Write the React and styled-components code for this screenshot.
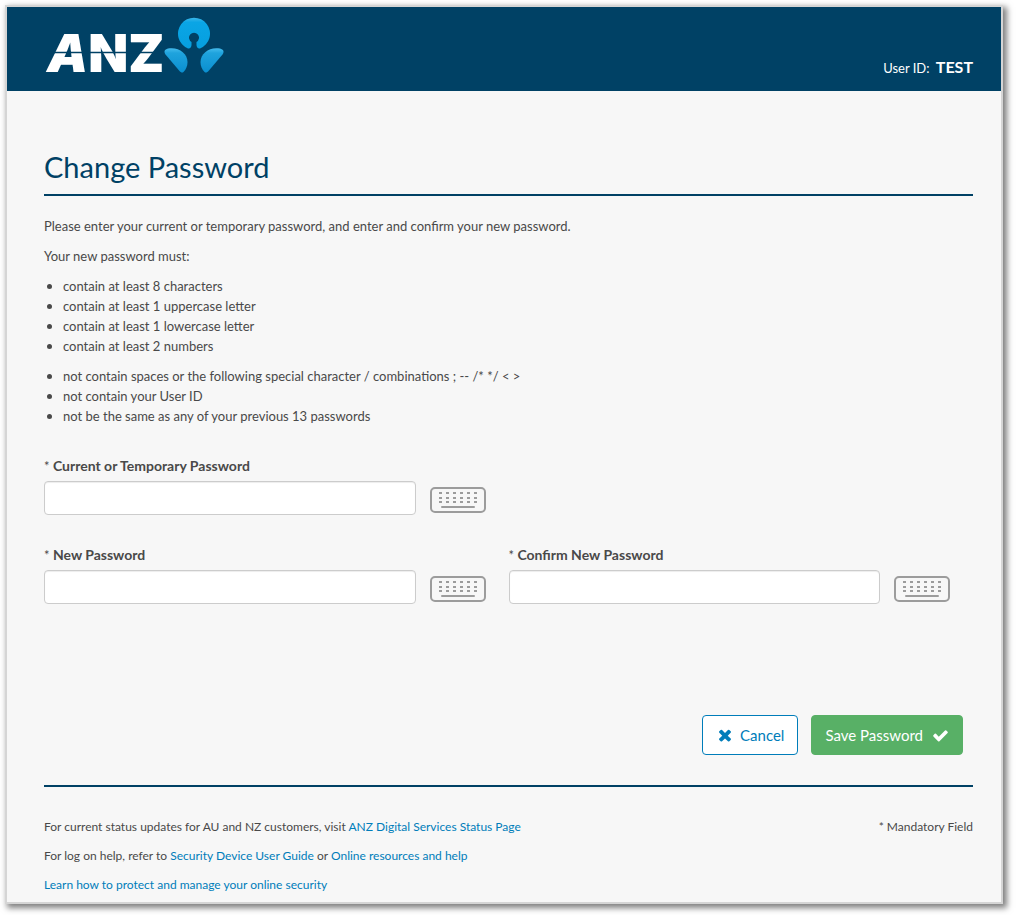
import React from 'react';
import styled, { createGlobalStyle } from 'styled-components';

function App() {

    return (
        <>
            <GlobalStyle />
            <Frame>
                <Header>
                    <Logo />
                    <UserInfo>
                        User ID: <UserName>TEST</UserName>
                    </UserInfo>
                </Header>
                <Content>
                    <Title>Change Password</Title>
                    <Text>Please enter your current or temporary password, and enter and confirm your new password.</Text>
                    <Text>Your new password must:</Text>
                    <RuleList>
                        <li>contain at least 8 characters</li>
                        <li>contain at least 1 uppercase letter</li>
                        <li>contain at least 1 lowercase letter</li>
                        <li>contain at least 2 numbers</li>
                    </RuleList>
                    <RuleList>
                        <li>not contain spaces or the following special character / combinations ; -- /* */ &lt; &gt;</li>
                        <li>not contain your User ID</li>
                        <li>not be the same as any of your previous 13 passwords</li>
                    </RuleList>
                    <form onSubmit={(e) => e.preventDefault()}>
                        <Fields>
                            <PasswordField id="current" label="Current or Temporary Password" $full />
                            <PasswordField id="new" label="New Password" />
                            <PasswordField id="confirm" label="Confirm New Password" />
                        </Fields>
                        <Actions>
                            <Button type="button">
                                <TimesIcon />
                                Cancel
                            </Button>
                            <Button type="submit" $primary>
                                Save Password
                                <CheckIcon />
                            </Button>
                        </Actions>
                    </form>
                    <Footer>
                        <FooterLinks>
                            <FooterText>
                                For current status updates for AU and NZ customers, visit <Link href="#status">ANZ Digital Services Status Page</Link>
                            </FooterText>
                            <FooterText>
                                For log on help, refer to <Link href="#guide">Security Device User Guide</Link> or <Link href="#help">Online resources and help</Link>
                            </FooterText>
                            <FooterText>
                                <Link href="#security">Learn how to protect and manage your online security</Link>
                            </FooterText>
                        </FooterLinks>
                        <FooterText>* Mandatory Field</FooterText>
                    </Footer>
                </Content>
            </Frame>
        </>
    );
}

function PasswordField({ id, label, $full }) {
    return (
        <Field $full={$full}>
            <Label htmlFor={id}><Star>*</Star> {label}</Label>
            <InputRow>
                <Input id={id} type="password" />
                <KeyboardButton type="button" aria-label="Open keyboard">
                    <KeyboardIcon />
                </KeyboardButton>
            </InputRow>
        </Field>
    );
}

function Logo() {
    return (
        <LogoSvg viewBox="0 0 182 74" role="img" aria-label="ANZ">
            <defs>
                <linearGradient id="head" x1="0" y1="0" x2="0" y2="1">
                    <stop offset="0" stopColor="#3bb7ea" />
                    <stop offset="0.15" stopColor="#0aa5e5" />
                    <stop offset="1" stopColor="#069fdf" />
                </linearGradient>
                <linearGradient id="petal" x1="0" y1="0" x2="0" y2="1">
                    <stop offset="0" stopColor="#45bcee" />
                    <stop offset="0.2" stopColor="#1fa3dd" />
                    <stop offset="1" stopColor="#0a8fd0" />
                </linearGradient>
            </defs>
            <LogoText x="3" y="55"><LogoSlant>A</LogoSlant>NZ</LogoText>
            <path d="M3 35.500H117" stroke="#004165" strokeWidth="1.500" />
            <path d="M144 31.500 A16 16 0 1 1 156 31.500 C154 32 152.500 30 152.500 28 L152.500 25 A5 5 0 1 0 147.500 25 L147.500 28 C147.500 30 146 32 144 31.500 Z" fill="url(#head)" />
            <path d="M121.500 37.500 C119.500 34.500 120.500 32.500 124 31.500 C134 29.500 143.500 36 143.500 45 C143.500 49 142 52.500 139.500 55 C138 56 137 55.500 135.500 54 Z" fill="url(#petal)" />
            <path d="M178.500 37.500 C180.500 34.500 179.500 32.500 176 31.500 C166 29.500 156.500 36 156.500 45 C156.500 49 158 52.500 160.500 55 C162 56 163 55.500 164.500 54 Z" fill="url(#petal)" />
        </LogoSvg>
    );
}

function KeyboardIcon() {
    return (
        <svg width="56" height="26" viewBox="0 0 56 26" fill="none" stroke="#9c9c9c" strokeWidth="2">
            <rect x="1" y="1" width="54" height="24" rx="4" />
            <path d="M9 6h38M9 11h38M9 15h38" strokeDasharray="3 4" />
            <path d="M12 20h32" strokeLinecap="round" />
        </svg>
    );
}

function TimesIcon() {
    return (
        <svg width="18" height="18" viewBox="0 0 1792 1792" fill="currentColor">
            <path d="M1490 1322q0 40-28 68l-136 136q-28 28-68 28t-68-28l-294-294-294 294q-28 28-68 28t-68-28l-136-136q-28-28-28-68t28-68l294-294-294-294q-28-28-28-68t28-68l136-136q28-28 68-28t68 28l294 294 294-294q28-28 68-28t68 28l136 136q28 28 28 68t-28 68l-294 294 294 294q28 28 28 68z" />
        </svg>
    );
}

function CheckIcon() {
    return (
        <svg width="17" height="17" viewBox="0 0 1792 1792" fill="currentColor">
            <path d="M1671 566q0 40-28 68l-724 724-136 136q-28 28-68 28t-68-28l-136-136-362-362q-28-28-28-68t28-68l136-136q28-28 68-28t68 28l294 295 656-657q28-28 68-28t68 28l136 136q28 28 28 68z" />
        </svg>
    );
}

const GlobalStyle = createGlobalStyle`
    * {
        box-sizing: border-box;
    }

    body {
        margin: 0;
        padding: 5px 13px 11px 5px;
        background: #fff;
        color: #494949;
        font-family: Lato, sans-serif;
        font-size: 13px;
        line-height: 20px;
    }

    button, input {
        font-family: inherit;
    }
`;

const Frame = styled.div`
    border: 2px solid #d5d5d5;
    background: #f7f7f7;
    box-shadow: 3px 3px 6px 1px rgba(0, 0, 0, 0.5);
`;

const Header = styled.header`
    display: flex;
    justify-content: space-between;
    align-items: flex-end;
    height: 84px;
    padding: 0 28px 0 37px;
    background: #004165;
    color: #fff;
`;

const LogoSvg = styled.svg`
    width: 182px;
    height: 74px;
`;

const LogoText = styled.text`
    font-family: Inter, sans-serif;
    font-size: 52px;
    font-weight: 900;
    fill: #fff;
`;

const LogoSlant = styled.tspan`
    font-style: italic;
`;

const UserInfo = styled.div`
    margin-bottom: 13px;
    font-size: 13px;
`;

const UserName = styled.strong`
    margin-left: 3px;
    font-size: 16px;
    font-weight: 700;
`;

const Content = styled.main`
    padding: 56px 28px 7px 37px;
`;

const Title = styled.h1`
    margin: 0 0 20px;
    padding-bottom: 7px;
    border-bottom: 2px solid #004165;
    color: #004165;
    font-size: 29px;
    font-weight: 400;
    line-height: 40px;
`;

const Text = styled.p`
    margin: 0 0 10px;
`;

const RuleList = styled.ul`
    margin: 0 0 10px;
    padding-left: 19px;

    li::marker {
        font-family: 'Noto Sans', sans-serif;
    }
`;

const Fields = styled.div`
    display: grid;
    grid-template-columns: 1fr 1fr;
    row-gap: 30px;
    margin-top: 30px;
`;

const Field = styled.div`
    grid-column: ${({ $full }) => ($full ? '1 / -1' : 'auto')};
    width: ${({ $full }) => ($full ? '50%' : '100%')};
`;

const Label = styled.label`
    display: block;
    margin-bottom: 5px;
    font-size: 14px;
    font-weight: 700;
`;

const Star = styled.span`
    font-size: 13px;
    font-weight: 400;
`;

const InputRow = styled.div`
    display: flex;
    gap: 14px;
`;

const Input = styled.input`
    width: 80%;
    height: 34px;
    padding: 6px 12px;
    border: 1px solid #ccc;
    border-radius: 4px;
    background: #fff;
    box-shadow: inset 0 1px 1px rgba(0, 0, 0, 0.075);
    font-size: 14px;
`;

const KeyboardButton = styled.button`
    flex: none;
    height: 32px;
    padding: 6px 0 0;
    border: 0;
    background: none;
    cursor: pointer;

    svg {
        display: block;
    }
`;

const Actions = styled.div`
    display: flex;
    justify-content: flex-end;
    gap: 13px;
    margin-top: 111px;
    padding: 0 10px 30px 0;
    border-bottom: 2px solid #004165;
`;

const Button = styled.button`
    display: flex;
    align-items: center;
    gap: ${({ $primary }) => ($primary ? '9px' : '6px')};
    height: 40px;
    padding: 0 13px;
    border: 1px solid ${({ $primary }) => ($primary ? '#58b066' : '#007dba')};
    border-radius: 4px;
    background: ${({ $primary }) => ($primary ? '#58b066' : '#fff')};
    color: ${({ $primary }) => ($primary ? '#fff' : '#007dba')};
    font-size: 15px;
    cursor: pointer;
`;

const Footer = styled.footer`
    display: flex;
    justify-content: space-between;
    padding-top: 30px;
    font-size: 12px;
`;

const FooterLinks = styled.div`
    display: flex;
    flex-direction: column;
    gap: 9px;
`;

const FooterText = styled.p`
    margin: 0;
`;

const Link = styled.a`
    color: #007dba;
    text-decoration: none;
`;

export default App;
